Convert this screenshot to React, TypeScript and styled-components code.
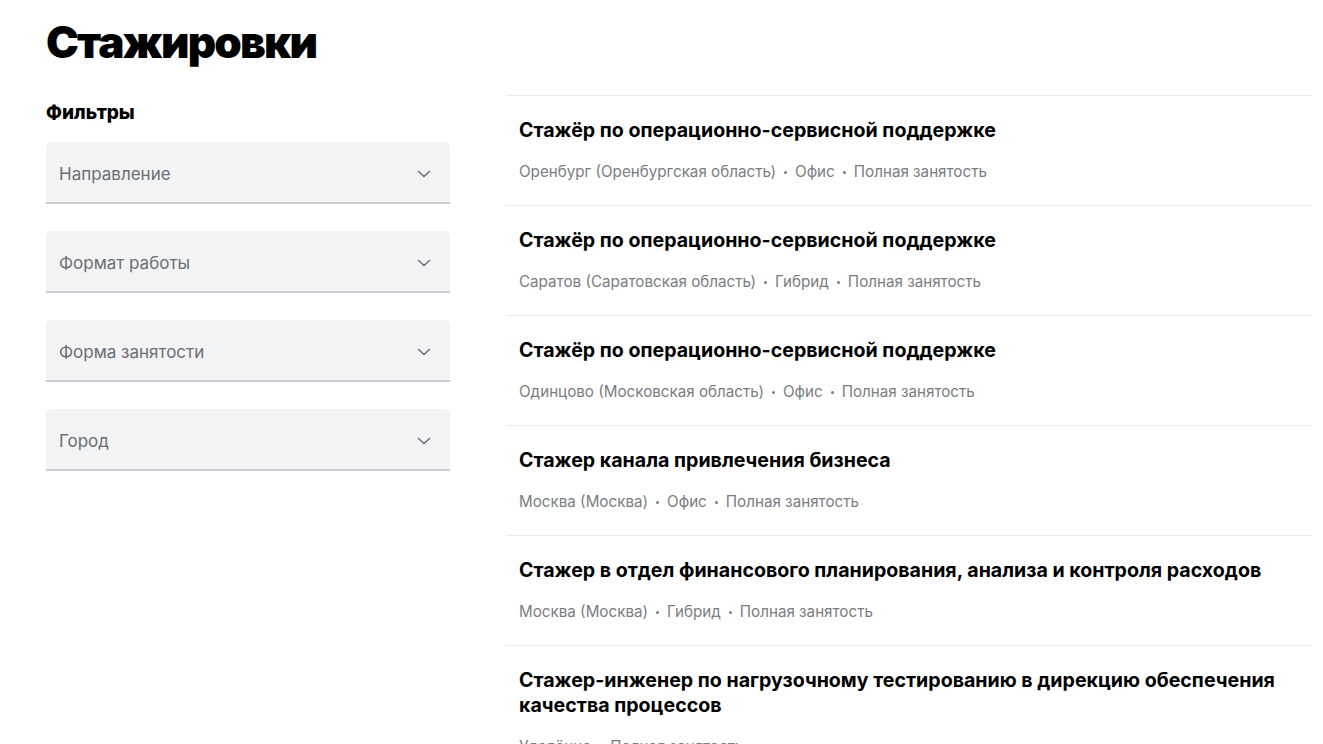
import React, { FC } from "react";
import styled, { createGlobalStyle } from "styled-components";

const GlobalStyle = createGlobalStyle`
  body {
    margin: 0;
    background: #fff;
    font-family: Inter, "Noto Sans", "Liberation Sans", sans-serif;
    color: #000;
  }
`;

const filters = ["Направление", "Формат работы", "Форма занятости", "Город"];

const vacancies = [
  {
    title: "Стажёр по операционно-сервисной поддержке",
    meta: ["Оренбург (Оренбургская область)", "Офис", "Полная занятость"],
  },
  {
    title: "Стажёр по операционно-сервисной поддержке",
    meta: ["Саратов (Саратовская область)", "Гибрид", "Полная занятость"],
  },
  {
    title: "Стажёр по операционно-сервисной поддержке",
    meta: ["Одинцово (Московская область)", "Офис", "Полная занятость"],
  },
  {
    title: "Стажер канала привлечения бизнеса",
    meta: ["Москва (Москва)", "Офис", "Полная занятость"],
  },
  {
    title: "Стажер в отдел финансового планирования, анализа и контроля расходов",
    meta: ["Москва (Москва)", "Гибрид", "Полная занятость"],
  },
  {
    title: "Стажер-инженер по нагрузочному тестированию в дирекцию обеспечения качества процессов",
    meta: ["Удалённо", "Полная занятость"],
  },
];

const Chevron: FC = () => (
  <svg width="16" height="16" viewBox="0 0 16 16" fill="none">
    <path d="M2.5 5.5L8 10.5L13.5 5.5" stroke="#6b6e74" strokeWidth="1.6" strokeLinecap="round" strokeLinejoin="round" />
  </svg>
);

const App: FC = () => {
  return (
    <Page>
      <GlobalStyle />
      <Title>Стажировки</Title>
      <Layout>
        <Sidebar>
          <SidebarTitle>Фильтры</SidebarTitle>
          {filters.map((f) => (
            <Select key={f}>
              <span>{f}</span>
              <Chevron />
            </Select>
          ))}
        </Sidebar>
        <List>
          {vacancies.map((v, i) => (
            <Item key={i}>
              <ItemTitle>{v.title}</ItemTitle>
              <Meta>
                {v.meta.map((m, j) => (
                  <React.Fragment key={j}>
                    {j > 0 && <Dot />}
                    {m}
                  </React.Fragment>
                ))}
              </Meta>
            </Item>
          ))}
        </List>
      </Layout>
    </Page>
  );
};

export default App;

const Page = styled.div`
  padding: 14px 11px 0 46px;
  height: 744px;
  box-sizing: border-box;
  overflow: hidden;
`;

const Title = styled.h1`
  margin: 0;
  font-size: 44px;
  line-height: 56px;
  font-weight: 900;
  letter-spacing: -1.8px;
`;

const Layout = styled.div`
  display: flex;
  gap: 56px;
  margin-top: 25px;
`;

const Sidebar = styled.div`
  width: 404px;
  flex-shrink: 0;
  display: flex;
  flex-direction: column;
  gap: 27px;
`;

const SidebarTitle = styled.div`
  font-size: 19px;
  font-weight: 800;
  line-height: 24px;
  margin-top: 6px;
  margin-bottom: -10px;
`;

const Select = styled.div`
  height: 62px;
  box-sizing: border-box;
  background: #f2f3f5;
  border-radius: 5px 5px 0 0;
  border-bottom: 2px solid #cbcdd2;
  display: flex;
  align-items: center;
  justify-content: space-between;
  padding: 4px 18px 0 13px;
  font-size: 17px;
  color: #6b6e74;
`;

const List = styled.div`
  flex: 1;
  display: flex;
  flex-direction: column;
`;

const Item = styled.div`
  border-top: 1px solid #e9eaec;
  padding: 22px 13px 23px;
  min-height: 110px;
  box-sizing: border-box;
`;

const ItemTitle = styled.div`
  font-size: 19.6px;
  font-weight: 700;
  line-height: 25px;
`;

const Meta = styled.div`
  margin-top: 19px;
  font-size: 15.2px;
  line-height: 20px;
  color: #7a7d82;
`;

const Dot = styled.span`
  display: inline-block;
  width: 3px;
  height: 3px;
  border-radius: 50%;
  background: #7a7d82;
  vertical-align: middle;
  margin: 0 8px;
`;
